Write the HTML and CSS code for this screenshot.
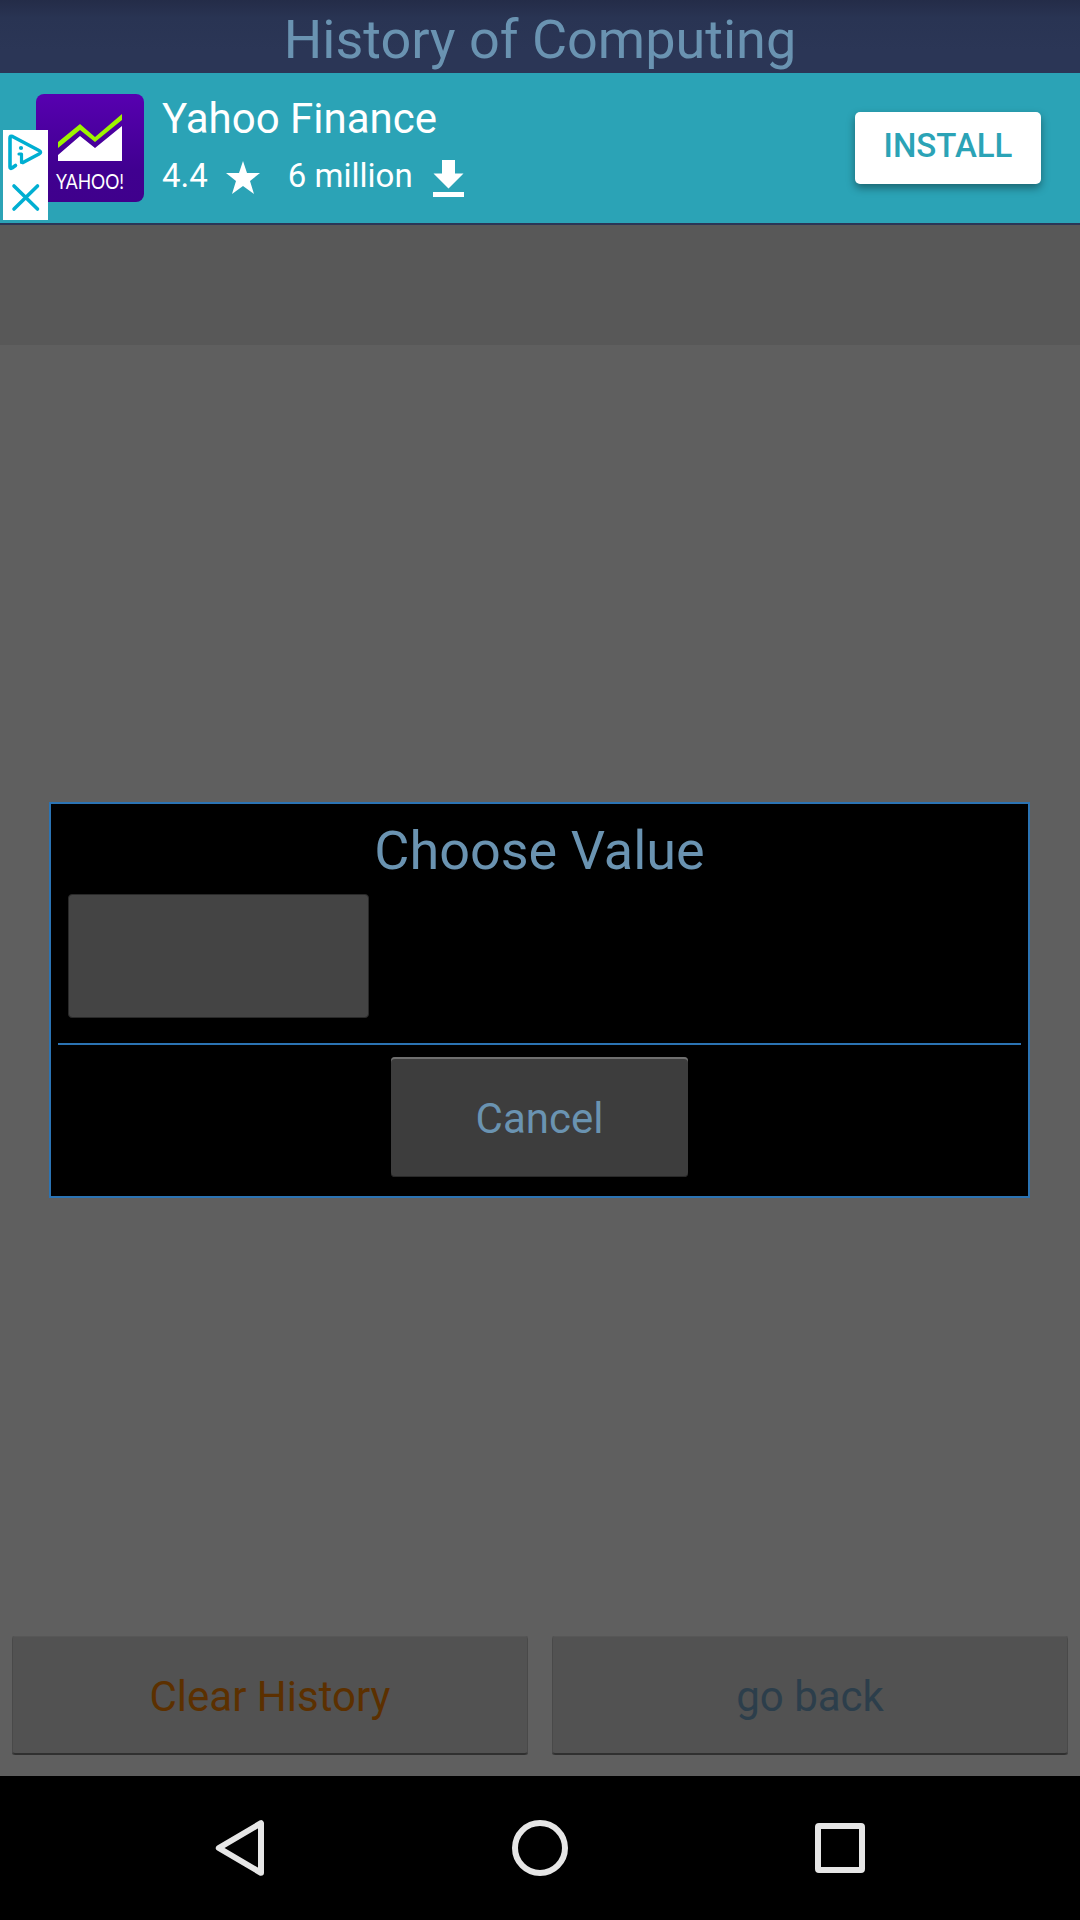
FILE: index.html
```html
<!DOCTYPE html>
<html lang="en">
<head>
<meta charset="utf-8">
<title>History of Computing</title>
<link rel="stylesheet" href="styles.css">
</head>
<body>
<div class="screen">
  <header class="title-bar"><h1 class="title">History of Computing</h1></header>
  <section class="ad">
    <svg class="app-icon" viewBox="0 0 108 108" width="108" height="108">
      <defs><linearGradient id="purple" x1="0" y1="0" x2="0" y2="1"><stop offset="0" stop-color="#5700b0"/><stop offset=".7" stop-color="#400090"/><stop offset="1" stop-color="#3f008c"/></linearGradient></defs>
      <rect width="108" height="108" rx="8" fill="url(#purple)"/>
      <path d="M22 48 44 30 59 43 86 20V26L59 48 44 36 22 54Z" fill="#9df500"/>
      <path d="M22 61 44 42 59 54 86 32V67H22Z" fill="#fff"/>
      <text class="yahoo" x="20" y="94.500" textLength="68" lengthAdjust="spacingAndGlyphs">YAHOO!</text>
    </svg>
    <div class="ad-info">
      <div class="ad-name">Yahoo Finance</div>
      <div class="ad-stats">
        <span>4.4</span>
        <svg class="star" viewBox="0 0 34 33" width="34" height="33"><path d="M17 0 21 12H34L24 20 28 33 17 25 6 33 10 20 0 12H13Z" fill="#fff"/></svg>
        <span class="downloads">6 million</span>
        <svg class="download" viewBox="0 0 31 37" width="31" height="37"><path d="M9 0H22V13.500H30.500L15.500 28.500.500 13.500H9ZM0 32H31V37H0Z" fill="#fff"/></svg>
      </div>
    </div>
    <button class="install">INSTALL</button>
    <div class="ad-choices">
      <svg viewBox="0 0 45 90" width="45" height="90" fill="none" stroke="#00afd2" stroke-width="3.600" stroke-linecap="round" stroke-linejoin="round">
        <path d="M12.500 35.500 9 38Q7 39 7 37V8Q7 5.500 9.500 6.500L36 20.500Q39 22.300 36 24L20 32.500"/>
        <path d="M16 24H18.500V32.500" stroke-width="3.200"/><circle cx="18" cy="18" r="2.100" fill="#00afd2" stroke="none"/>
        <path d="M11 56 34.500 79M34.500 56 11 79"/>
      </svg>
    </div>
  </section>
  <main class="content">
    <div class="strip"></div>
    <section class="dialog">
      <h2 class="dialog-title">Choose Value</h2>
      <button class="value" aria-label="Value"></button>
      <div class="divider"></div>
      <button class="cancel">Cancel</button>
    </section>
    <div class="actions">
      <button class="action clear">Clear History</button>
      <button class="action back">go back</button>
    </div>
  </main>
  <nav class="nav">
    <svg viewBox="0 0 60 60" width="60" height="60"><path d="M51 5.200V54.800L8.800 30Z"/></svg>
    <svg viewBox="0 0 60 60" width="60" height="60"><circle cx="30" cy="30" r="25"/></svg>
    <svg viewBox="0 0 60 60" width="60" height="60"><rect x="8" y="8" width="44" height="44" rx="1"/></svg>
  </nav>
</div>
</body>
</html>
```
FILE: styles.css
```css
* { box-sizing: border-box; }
body { margin: 0; font-family: Roboto, sans-serif; }
h1, h2 { margin: 0; font-weight: 400; }
button { border: 0; padding: 0; font: inherit; }
.screen { width: 1080px; height: 1920px; display: flex; flex-direction: column; overflow: hidden; background: #000; }
.title-bar { height: 73px; background: linear-gradient(#242c48, #293453 18px, #2b3656 50px); text-align: center; }
.title { font-size: 54px; line-height: 80px; color: #6a93b1; white-space: nowrap; }
.ad { position: relative; height: 152px; background: #2ba3b6; border-bottom: 2px solid #2b3656; display: flex; align-items: flex-start; padding: 21px 39px 0 36px; color: #fff; }
.ad-info { margin-left: 18px; flex: 1; }
.ad-name { font-size: 42px; line-height: 50px; }
.ad-stats { display: flex; align-items: flex-start; font-size: 33px; line-height: 40px; margin-top: 12px; white-space: nowrap; }
.star { margin: 5px 0 0 18px; }
.downloads { margin-left: 28px; }
.download { margin: 4px 0 0 20px; }
.yahoo { font: 400 21px Lato, sans-serif; fill: #fff; }
.install { margin-top: 18px; width: 186px; height: 72px; border-radius: 5px; background: #fff; color: #2ba3b6; font-size: 33px; font-weight: 500; line-height: 68px; padding-bottom: 4px; box-shadow: 0 4px 8px rgba(0,0,0,.38); }
.ad-choices { position: absolute; left: 3px; top: 57px; width: 45px; height: 90px; background: #fff; }
.ad-choices svg { display: block; }
.content { height: 1551px; display: flex; flex-direction: column; align-items: center; background: #5f5f5f; }
.strip { width: 100%; height: 120px; background: #585858; }
.dialog { align-self: flex-start; width: 981px; height: 396px; margin: 457px 0 0 49px; border: 2px solid #2b73b3; background: #000; padding: 0 7px; display: flex; flex-direction: column; align-items: center; }
.dialog-title { font-size: 54px; line-height: 64px; margin-top: 15px; color: #6a93b1; }
.value { align-self: flex-start; width: 301px; height: 124px; margin: 11px 0 0 10px; border: 1px solid #292929; border-radius: 4px; background: #444; }
.divider { align-self: stretch; height: 2px; margin-top: 25px; background: #2b73b3; }
.cancel { width: 297px; height: 120px; margin-top: 12px; border-radius: 4px; background: #3d3d3d; box-shadow: inset 0 2px #6f6f6f, inset 0 -1px #292929; color: #6a93b1; font-size: 42px; line-height: 116px; padding-top: 4px; }
.actions { width: 100%; display: flex; gap: 24px; padding: 0 12px; margin-top: 438px; }
.action { flex: 1; height: 119px; border-radius: 3px; background: #525252; box-shadow: inset 0 1px #575757, inset 1px 0 #494949, inset -1px 0 #494949, inset 0 -2px #303030; font-size: 42px; line-height: 117px; padding-top: 2px; }
.clear { color: #5c3000; }
.back { color: #2c3e4b; }
.nav { height: 144px; display: flex; justify-content: center; align-items: center; gap: 240px; }
.nav svg { fill: none; stroke: #e6e6e6; stroke-width: 6; stroke-linejoin: round; }
```
